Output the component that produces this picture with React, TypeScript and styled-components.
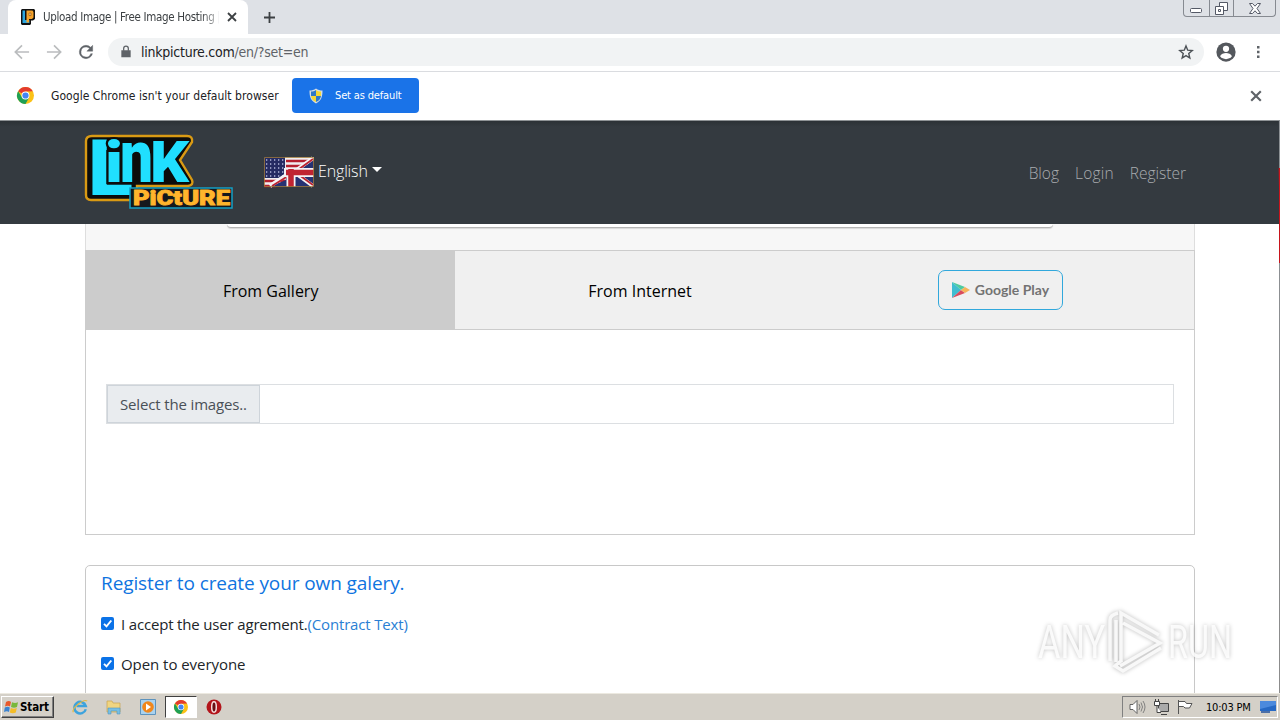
import type { ReactNode } from "react";
import styled, { createGlobalStyle } from "styled-components";

const GlobalStyle = createGlobalStyle`
  * {
    box-sizing: border-box;
  }

  body {
    margin: 0;
    overflow: hidden;
    background: #fff;
  }
`;

const Screen = styled.div`
  position: relative;
  display: flex;
  flex-direction: column;
  width: 1280px;
  height: 720px;
  overflow: hidden;
  font-family: "Open Sans", "Noto Sans", sans-serif;
`;

const Text = styled.span<{ $spacing?: number }>`
  display: block;
  white-space: nowrap;
  letter-spacing: ${({ $spacing }) => $spacing ?? 0}px;
`;

/* browser chrome */

const TabStrip = styled.div`
  display: flex;
  height: 34px;
  flex: none;
  padding-left: 8px;
  background: #dee1e6;
`;

const Tab = styled.div`
  display: flex;
  align-items: center;
  width: 240px;
  height: 34px;
  padding: 0 11px 0 12px;
  border-radius: 8px 8px 0 0;
  background: #fff;
  color: #3c4043;
  font-family: "DejaVu Sans Condensed", "DejaVu Sans", sans-serif;
  font-stretch: condensed;
  font-size: 11.5px;
`;

const TabTitle = styled.div`
  width: 176px;
  margin-left: 7px;
  overflow: hidden;
  mask-image: linear-gradient(to right, #000 158px, transparent 182px);
`;

const TabClose = styled.div`
  margin-left: auto;
`;

const NewTab = styled.div`
  display: flex;
  align-items: center;
  margin-left: 15px;
`;

const WindowButtons = styled.div`
  display: flex;
  width: 93px;
  height: 17px;
  margin: 0 4px 0 auto;
  border: 1px solid #868a91;
  border-top: 0;
  border-radius: 0 0 4px 4px;
`;

const WindowButton = styled.div<{ $width: number }>`
  display: flex;
  align-items: center;
  justify-content: center;
  width: ${({ $width }) => $width}px;

  & + & {
    border-left: 1px solid #868a91;
  }
`;

const Toolbar = styled.div`
  display: flex;
  align-items: center;
  flex: none;
  height: 38px;
  padding: 0 12px 2px 12px;
  border-bottom: 1px solid #dadce0;
  background: #fff;
`;

const NavIcons = styled.div`
  display: flex;
  gap: 12px;
  width: 96px;
`;

const AddressBar = styled.div`
  display: flex;
  align-items: center;
  width: 1096px;
  height: 28px;
  padding: 0 9px 0 11px;
  border-radius: 14px;
  background: #f1f3f4;
  color: #5f6368;
  font-family: "DejaVu Sans Condensed", "DejaVu Sans", sans-serif;
  font-stretch: condensed;
  font-weight: 400;
  font-size: 14px;

  b {
    color: #202124;
    font-weight: 400;
  }
`;

const Url = styled.div`
  flex: 1;
  margin-left: 8px;
  letter-spacing: -0.24px;
`;

const ToolbarEnd = styled.div`
  display: flex;
  align-items: center;
  gap: 13px;
  margin-left: 11px;
`;

const InfoBar = styled.div`
  display: flex;
  align-items: center;
  flex: none;
  height: 49px;
  padding: 0 18px 1px 17px;
  border-bottom: 1px solid #8f9396;
  background: #fff;
  color: #202124;
  font-family: "DejaVu Sans Condensed", "DejaVu Sans", sans-serif;
  font-stretch: condensed;
  font-size: 12px;
`;

const InfoText = styled.div`
  width: 241px;
  margin-left: 17px;
  white-space: nowrap;
`;

const DefaultButton = styled.div`
  display: flex;
  align-items: center;
  gap: 12px;
  width: 127px;
  height: 35px;
  padding-left: 17px;
  border-radius: 4px;
  background: #1a73e8;
  color: #fff;
  font-size: 11px;
`;

const Dismiss = styled.div`
  display: flex;
  margin-left: auto;
`;

/* web page */

const Viewport = styled.div`
  display: flex;
  flex: none;
  height: 572px;
  overflow: hidden;
`;

const Page = styled.div`
  display: flex;
  flex-direction: column;
  flex: none;
  width: 1278px;
`;

const EdgeStrip = styled.div`
  flex: none;
  width: 2px;
  background:
    linear-gradient(#c8141c, #c8141c) 1px 47px / 1px 95px no-repeat,
    linear-gradient(#8c9094, #8c8c8c) 1px 0 / 1px 100% no-repeat,
    linear-gradient(#6b2a30, #343a40) 0 47px / 1px 20px no-repeat,
    linear-gradient(#343a40, #343a40) 0 0 / 1px 103px no-repeat,
    #fff;
`;

const Header = styled.header`
  display: flex;
  flex: none;
  height: 103px;
  padding: 13px 92px 0 85px;
  background: linear-gradient(#2c3136, #343a40 6px);
`;

const Language = styled.div`
  display: flex;
  align-items: center;
  height: 30px;
  margin: 23px 0 0 31px;
  color: #fff;
  font-weight: 300;
  font-size: 16px;
`;

const LanguageName = styled.div`
  margin: -3px 4px 0 4px;
`;

const Caret = styled.div`
  margin-top: -5px;
  border: 5px solid transparent;
  border-top-color: #fff;
  border-bottom: 0;
`;

const HeaderNav = styled.nav`
  display: flex;
  gap: 16px;
  margin: 28px 0 0 auto;
  color: #a9acaf;
  font-weight: 300;
  font-size: 15.5px;
  line-height: 22px;
`;

const Preview = styled.div`
  display: flex;
  justify-content: center;
  flex: none;
  width: 1110px;
  height: 26px;
  margin-left: 85px;
  border: 1px solid #dedede;
  border-width: 0 1px;
  background: #f7f7f7;
`;

const PreviewBox = styled.div`
  width: 826px;
  height: 4px;
  border-bottom: 1px solid #b4b4b4;
  border-radius: 0 0 5px 5px;
  background: #fff;
  box-shadow: 0 1px 1px #d8d8d8;
`;

const SourceTabs = styled.div`
  display: flex;
  flex: none;
  width: 1110px;
  height: 80px;
  margin-left: 85px;
  border: 1px solid #ccc;
  background: #f0f0f0;
`;

const SourceTab = styled.div<{ $active?: boolean }>`
  display: flex;
  align-items: center;
  justify-content: center;
  flex: 1;
  background: ${({ $active }) => ($active ? "#ccc" : "transparent")};
  color: #000;
  font-size: 16px;

  > span {
    padding-top: 2px;
  }
`;

const PlayBadge = styled.div`
  display: flex;
  align-items: center;
  gap: 5px;
  width: 125px;
  height: 40px;
  margin-right: 18px;
  padding: 0 0 1px 12px;
  border: 1px solid #31a8dc;
  border-radius: 7px;
  color: #737373;
  font-family: Lato, sans-serif;
  font-weight: 700;
  font-size: 14px;
`;

const UploadPanel = styled.div`
  flex: none;
  width: 1110px;
  height: 205px;
  margin-left: 85px;
  padding: 54px 20px 0;
  border: 1px solid #ccc;
  border-top: 0;
`;

const FileField = styled.div`
  display: flex;
  width: 1068px;
  height: 40px;
  border: 1px solid #dcdfe2;
`;

const FileLabel = styled.div`
  display: flex;
  align-items: center;
  width: 153px;
  padding: 0 0 0 12px;
  border: 1px solid #ced4da;
  background: #e9ecef;
  color: #495057;
  font-size: 15px;
  line-height: 22px;
`;

const Options = styled.div`
  flex: none;
  width: 1110px;
  height: 160px;
  margin: 30px 0 0 85px;
  padding: 5px 15px;
  border: 1px solid #c8c8c8;
  border-radius: 5px 5px 0 0;
`;

const OptionsTitle = styled.div`
  height: 32px;
  color: #0f74e0;
  font-size: 19px;
  line-height: 25px;
`;

const Option = styled.label`
  display: flex;
  align-items: center;
  gap: 7px;
  height: 40px;
  color: #212529;
  font-size: 15px;

  > span {
    padding-top: 2px;
  }

  em {
    color: #2a7fd4;
    font-style: normal;
  }
`;

/* desktop taskbar */

const Taskbar = styled.div`
  display: flex;
  align-items: center;
  flex: none;
  height: 27px;
  padding: 0 2px 0 1px;
  border-top: 1px solid #ece9e0;
  background: #d4d0c8;
  font-family: "DejaVu Sans Condensed", "DejaVu Sans", sans-serif;
  font-stretch: condensed;
`;

const StartButton = styled.div`
  display: flex;
  align-items: center;
  gap: 1px;
  width: 53px;
  height: 22px;
  padding-left: 2px;
  border: 1px solid;
  border-color: #fff #404040 #404040 #fff;
  box-shadow: inset -1px -1px #808080;
  color: #000;
  font-weight: 700;
  font-size: 11.5px;
`;

const QuickLaunch = styled.div`
  display: flex;
  align-items: center;
  margin-left: 9px;
`;

const Launcher = styled.div<{ $active?: boolean }>`
  display: flex;
  align-items: center;
  justify-content: center;
  width: ${({ $active }) => ($active ? 32 : 34)}px;
  height: 22px;
  border: 1px solid;
  border-color: ${({ $active }) => ($active ? "#404040 #fff #fff #404040" : "transparent")};
  background: ${({ $active }) => ($active ? "#fff" : "transparent")};
`;

const Tray = styled.div`
  display: flex;
  align-items: center;
  gap: 7px;
  width: 156px;
  height: 22px;
  margin-left: auto;
  padding-left: 6px;
  border: 1px solid;
  border-color: #808080 #fff #fff #808080;
  color: #000;
  font-size: 11px;
`;

const Clock = styled.div`
  width: 47px;
  margin-left: 6px;
  letter-spacing: -0.2px;
  white-space: nowrap;
`;

const Watermark = styled.div`
  position: absolute;
  left: 1030px;
  top: 602px;
`;

const Svg = styled.svg`
  display: block;
  flex: none;
  overflow: visible;
`;

const MarkSvg = styled.svg`
  display: block;
  filter: drop-shadow(0 0 2px rgba(0, 0, 0, 0.28));
`;

type IconProps = { w: number; h?: number; box?: string; children: ReactNode };

const Icon = ({ w, h = w, box, children }: IconProps) => (
  <Svg width={w} height={h} viewBox={box ?? `0 0 ${w} ${h}`} fill="none">
    {children}
  </Svg>
);

const ChromeLogo = ({ size }: { size: number }) => (
  <Icon w={size} box="0 0 24 24">
    <circle cx="12" cy="12" r="12" fill="#fbc116" />
    <path d="M12 12 1.6 6A12 12 0 0 1 22.4 6L12 6.5z" fill="#e33b2e" />
    <path d="M1.6 6A12 12 0 0 0 12 24l5-9-5-3-5 2.6z" fill="#1fa055" />
    <circle cx="12" cy="12" r="5.6" fill="#fff" />
    <circle cx="12" cy="12" r="4.4" fill="#4285f4" />
  </Icon>
);

const Favicon = () => (
  <Icon w={16}>
    <path d="M2 0h12l1 1v9l-2 1.5h-2V15l-1 1H2l-1-1V1z" fill="#111" />
    <path d="M2.500 1.500H5v9.500h4.500v3h-7z" fill="#2ba6e0" />
    <path d="M6.500 1.500h6L13.500 3v5.500l-1.500 1.500H9v3.500H6.500z" fill="#f5a32b" />
    <path d="M9 4h2v2.500H9z" fill="#fbd08a" stroke="#8a4d10" strokeWidth=".6" />
  </Icon>
);

const Cross = ({ color, size }: { color: string; size: number }) => (
  <Icon w={size} box="0 0 10 10">
    <path d="m1 1 8 8M9 1 1 9" stroke={color} strokeWidth="1.8" />
  </Icon>
);

const Logo = () => (
  <Icon w={148} h={77}>
    <path
      d="M7 2h95q6 0 5 6L95 26l12 20q2 5-4 6H52v9q0 5-5 5H6q-5 0-5-5V7q0-5 6-5z"
      fill="#0c0c0c"
      stroke="#d99a14"
      strokeWidth="2.4"
    />
    <g
      fill="#20dfff"
      stroke="#0c0c0c"
      strokeWidth="1"
      paintOrder="stroke"
      fontFamily="Roboto"
      fontWeight="900"
    >
      <text x="3" y="61" fontSize="77" textLength="45" lengthAdjust="spacingAndGlyphs">L</text>
      <text x="20" y="48" fontSize="57" strokeWidth="4" textLength="18" lengthAdjust="spacingAndGlyphs">i</text>
      <text x="35" y="48" fontSize="74" textLength="33" lengthAdjust="spacingAndGlyphs">n</text>
      <text x="65" y="48" fontSize="58" textLength="39" lengthAdjust="spacingAndGlyphs">K</text>
    </g>
    <path d="M45 54h102v20H45z" fill="#15191c" stroke="#159fc4" strokeWidth="1.5" />
    <text
      x="48"
      y="71"
      fontSize="20"
      textLength="97"
      lengthAdjust="spacingAndGlyphs"
      fontFamily="Roboto"
      fontWeight="900"
      fill="#ffb52c"
      stroke="#ffb52c"
      strokeWidth=".8"
    >
      PiCtURE
    </text>
  </Icon>
);

const Flag = () => (
  <Icon w={50} h={30}>
    <path d="M0 0h50v30H0z" fill="#f0eef0" />
    <path d="M22 4h26M22 9h22M0 24h22M0 29h12" stroke="#b5202e" strokeWidth="2.6" />
    <path d="M0 0h21v21H0z" fill="#252b62" />
    <path d="M2 3h19M2 7h19M2 11h19M2 15h19M2 19h19" stroke="#b4b9da" strokeWidth="1.3" strokeDasharray="1.3 2.7" />
    <path d="M50 3v27H5l17-7V15h10z" fill="#263272" />
    <path d="M49 1 30 15l19 14M24 17 6 29" stroke="#f5f3f5" strokeWidth="4" />
    <path d="M49 2 31 15l18 13M24 19 8 29" stroke="#bb2331" strokeWidth="1.8" />
    <path d="M27 12v18M20 15.500h30" stroke="#f5f3f5" strokeWidth="9" />
    <path d="M27 12v18M22 15.500h28" stroke="#c02432" strokeWidth="5.500" />
    <path d="M.5.500h49v29H.5z" stroke="#a07a38" strokeWidth=".8" />
  </Icon>
);

const Shield = () => (
  <Icon w={14} h={16}>
    <path d="M7 .5c2 1.500 4 2 6.500 2 0 6-1 10-6.500 13C1.500 12.500.5 8.500.5 2.500 3 2.500 5 2 7 .5z" fill="#d5dde3" />
    <path d="M7 2v6H2V3.500C4 3.500 5.500 3 7 2zM7 8h5c-.5 3-2 5-5 6z" fill="#2f78c8" />
    <path d="M7 2c1.500 1 3 1.500 5 1.500V8H7zM2 8h5v6c-3-1-4.500-3-5-6z" fill="#f5d735" />
  </Icon>
);

const AnyRunMark = () => (
  <MarkSvg width="215" height="78" viewBox="0 0 215 78">
    <g fill="#fff" fillOpacity=".85" fontFamily="Roboto" fontSize="46">
      <text x="8" y="56" textLength="67" lengthAdjust="spacingAndGlyphs">ANY</text>
      <text x="138" y="56" textLength="64" lengthAdjust="spacingAndGlyphs">RUN</text>
    </g>
    <g fill="none" stroke="#f8f8f8" strokeWidth="3.500">
      <path d="M88 11q-8 2-8 7v41M86 60V18" />
      <path d="M91 60V11l38 22M93 21l37 20-40 23M92 58l-7 6 8 5 38-23" />
    </g>
  </MarkSvg>
);

const App = () => {
  return (
    <Screen>
      <GlobalStyle />
      <TabStrip>
        <Tab>
          <Favicon />
          <TabTitle>
            <Text $spacing={-0.33}>Upload Image | Free Image Hosting |</Text>
          </TabTitle>
          <TabClose>
            <Cross color="#3c4043" size={10} />
          </TabClose>
        </Tab>
        <NewTab>
          <Icon w={13}>
            <path d="M6.500 1v11M1 6.500h11" stroke="#3c4043" strokeWidth="1.8" />
          </Icon>
        </NewTab>
        <WindowButtons>
          <WindowButton $width={25}>
            <Icon w={12} h={10}>
              <rect x=".5" y="5.500" width="11" height="4" rx="1" fill="#fff" stroke="#545966" />
            </Icon>
          </WindowButton>
          <WindowButton $width={25}>
            <Icon w={13}>
              <path d="M4.500.500h8v8h-8z" fill="#fff" stroke="#545966" />
              <path d="M.5 4.500h8v8h-8z" fill="#fff" stroke="#545966" />
              <path d="M3.500 7.500h2v2h-2z" stroke="#545966" />
            </Icon>
          </WindowButton>
          <WindowButton $width={42}>
            <Icon w={12} h={11}>
              <path d="M.5.500h3L6 3.200 8.500.500h3L8 5.500l3.500 5h-3L6 7.800 3.500 10.500h-3L4 5.500z" fill="#fff" stroke="#545966" />
            </Icon>
          </WindowButton>
        </WindowButtons>
      </TabStrip>

      <Toolbar>
        <NavIcons>
          <Icon w={20} box="0 0 24 24">
            <path d="M20.500 12H5M12 4l-8 8 8 8" stroke="#babcbe" strokeWidth="2" />
          </Icon>
          <Icon w={20} box="0 0 24 24">
            <path d="M3.500 12H19M12 4l8 8-8 8" stroke="#babcbe" strokeWidth="2" />
          </Icon>
          <Icon w={20} box="0 0 24 24">
            <path
              d="M17.650 6.350A7.950 7.950 0 0 0 12 4a8 8 0 1 0 7.730 10h-2.080A6 6 0 1 1 12 6c1.660 0 3.140.69 4.220 1.780L13 11h7V4z"
              fill="#5f6368"
              stroke="#5f6368"
              strokeWidth=".5"
            />
          </Icon>
        </NavIcons>
        <AddressBar>
          <Icon w={14} box="0 0 24 24">
            <path d="M4 9h16v12H4z" fill="#5f6368" />
            <path d="M8 10V6a4 4 0 0 1 8 0v4" stroke="#5f6368" strokeWidth="2.200" />
          </Icon>
          <Url>
            <b>linkpicture.com</b>/en/?set=en
          </Url>
          <Icon w={18} box="0 0 24 24">
            <path
              d="m12 4 2.300 5.600 6 .5-4.600 4 1.400 5.900L12 16.900 6.900 20l1.400-5.900-4.600-4 6-.5z"
              stroke="#4c5156"
              strokeWidth="1.900"
            />
          </Icon>
        </AddressBar>
        <ToolbarEnd>
          <Icon w={22} box="0 0 24 24">
            <circle cx="12" cy="12" r="10.500" fill="#54585d" />
            <circle cx="12" cy="8.500" r="3.400" fill="#fff" />
            <path d="M5.500 16.500c1-2.500 4-3.500 6.500-3.500s5.500 1 6.500 3.500a8 8 0 0 1-13 0z" fill="#fff" />
          </Icon>
          <Icon w={16}>
            <path d="M7 2h2.500v2.500H7zM7 6.800h2.500v2.500H7zM7 11.500h2.500V14H7z" fill="#5f6368" />
          </Icon>
        </ToolbarEnd>
      </Toolbar>

      <InfoBar>
        <ChromeLogo size={17} />
        <InfoText>
          <Text $spacing={0.05}>Google Chrome isn't your default browser</Text>
        </InfoText>
        <DefaultButton>
          <Shield />
          <Text $spacing={-0.15}>Set as default</Text>
        </DefaultButton>
        <Dismiss>
          <Cross color="#5f6368" size={12} />
        </Dismiss>
      </InfoBar>

      <Viewport>
        <Page>
          <Header>
            <Logo />
            <Language>
              <Flag />
              <LanguageName>
                <Text $spacing={-0.15}>English</Text>
              </LanguageName>
              <Caret />
            </Language>
            <HeaderNav>
              <Text>Blog</Text>
              <Text $spacing={0.2}>Login</Text>
              <Text>Register</Text>
            </HeaderNav>
          </Header>
          <Preview>
            <PreviewBox />
          </Preview>
          <SourceTabs>
            <SourceTab $active>
              <Text>From Gallery</Text>
            </SourceTab>
            <SourceTab>
              <Text>From Internet</Text>
            </SourceTab>
            <SourceTab>
              <PlayBadge>
                <Icon w={19} h={18}>
                  <path d="M1 1v16l9-8z" fill="#3fbdd0" />
                  <path d="m1 1 9 8 4-3z" fill="#4dcb9f" />
                  <path d="m1 17 9-8 4 3z" fill="#d94b5d" />
                  <path d="m14 6 5 3-5 3-4-3z" fill="#f6b45a" />
                </Icon>
                <Text>Google Play</Text>
              </PlayBadge>
            </SourceTab>
          </SourceTabs>
          <UploadPanel>
            <FileField>
              <FileLabel>
                <Text $spacing={-0.15}>Select the images..</Text>
              </FileLabel>
            </FileField>
          </UploadPanel>
          <Options>
            <OptionsTitle>
              <Text $spacing={-0.1}>Register to create your own galery.</Text>
            </OptionsTitle>
            {["I accept the user agrement.", "Open to everyone"].map((label, i) => (
              <Option key={label}>
                <Icon w={13}>
                  <rect width="13" height="13" rx="2" fill="#0b72e7" />
                  <path d="m3 6.800 2.500 2.500L10.300 3.500" stroke="#fff" strokeWidth="1.900" />
                </Icon>
                <Text $spacing={i === 0 ? -0.17 : -0.05}>
                  {label}
                  {i === 0 && <em>(Contract Text)</em>}
                </Text>
              </Option>
            ))}
          </Options>
        </Page>
        <EdgeStrip />
      </Viewport>

      <Taskbar>
        <StartButton>
          <Icon w={15} h={14}>
            <path d="M2 2q3-2 5 0L6 6.500q-2-1.500-5 0z" fill="#e8592b" />
            <path d="M8 2.300q3 1.500 6 0L13 7q-3 1.500-6 0z" fill="#79b83a" />
            <path d="M.8 7.500q3-1.500 5 0L5 12q-2-1.500-5 0z" fill="#3b83d0" />
            <path d="M6.800 8q3 1.500 6 0l-1 4.500q-3 1.500-6 0z" fill="#f4bd28" />
          </Icon>
          <Text $spacing={-0.1}>Start</Text>
        </StartButton>
        <QuickLaunch>
          <Launcher>
            <Icon w={16} box="0 0 18 18">
              <path d="M15.500 11.500A6.500 6.500 0 1 1 15.500 8H5" stroke="#3da3dd" strokeWidth="2.800" />
              <path d="M1.500 15C-1 10 14-1 17 2.500" stroke="#e2b944" strokeWidth="1.300" />
            </Icon>
          </Launcher>
          <Launcher>
            <Icon w={16}>
              <path d="M1 2h5l1 2h7v9H1z" fill="#f0d581" stroke="#c9a54e" strokeWidth=".7" />
              <path d="M2 9h12v6h-3v-3H5v3H2z" fill="#77bfe4" stroke="#5294bd" strokeWidth=".6" />
            </Icon>
          </Launcher>
          <Launcher>
            <Icon w={16}>
              <path d="M.5.500h15v15H.5z" fill="#a9d2ef" stroke="#5d93bd" />
              <circle cx="8" cy="8" r="5.800" fill="#f0871c" />
              <path d="m6 4.500 5 3.500-5 3.500z" fill="#fff" />
            </Icon>
          </Launcher>
          <Launcher $active>
            <ChromeLogo size={14} />
          </Launcher>
          <Launcher>
            <Icon w={16}>
              <circle cx="8" cy="8" r="7.500" fill="#b3151b" />
              <ellipse cx="8" cy="8" rx="2.300" ry="5.200" fill="#681014" stroke="#f5dede" strokeWidth="1.500" />
            </Icon>
          </Launcher>
        </QuickLaunch>
        <Tray>
          <Icon w={17} h={16}>
            <path d="M1 5.500h3l4-4v13l-4-4H1z" fill="#fff" stroke="#555" strokeWidth=".9" />
            <path d="M10 5q2 3 0 6M12 3.500q3 4.500 0 9M14 2q4 6 0 12" stroke="#777" strokeWidth=".9" />
          </Icon>
          <Icon w={17} h={16}>
            <path d="M5.500 4.500h10v8h-10zM8 15.500h6" fill="#aaa" stroke="#444" />
            <path d="M1.500 2.500h5v4h-5zM2.500 0v2M5.500 0v2M4 7v6.500h4" fill="#fff" stroke="#444" />
          </Icon>
          <Icon w={16}>
            <path d="M1.500 1v14M2 2.500h6l1.500 2H15L12.500 9H8L6.500 7.500H2" fill="#fff" stroke="#555" />
          </Icon>
          <Clock>10:03 PM</Clock>
          <Icon w={16} h={14}>
            <path d="M0 1h16v10H0z" fill="#2769c4" />
            <path d="M0 1h16v4L0 9z" fill="#4c8add" />
            <path d="M1 12h9" stroke="#1f4f9c" strokeWidth="1.500" />
          </Icon>
        </Tray>
      </Taskbar>

      <Watermark>
        <AnyRunMark />
      </Watermark>
    </Screen>
  );
};

export default App;
